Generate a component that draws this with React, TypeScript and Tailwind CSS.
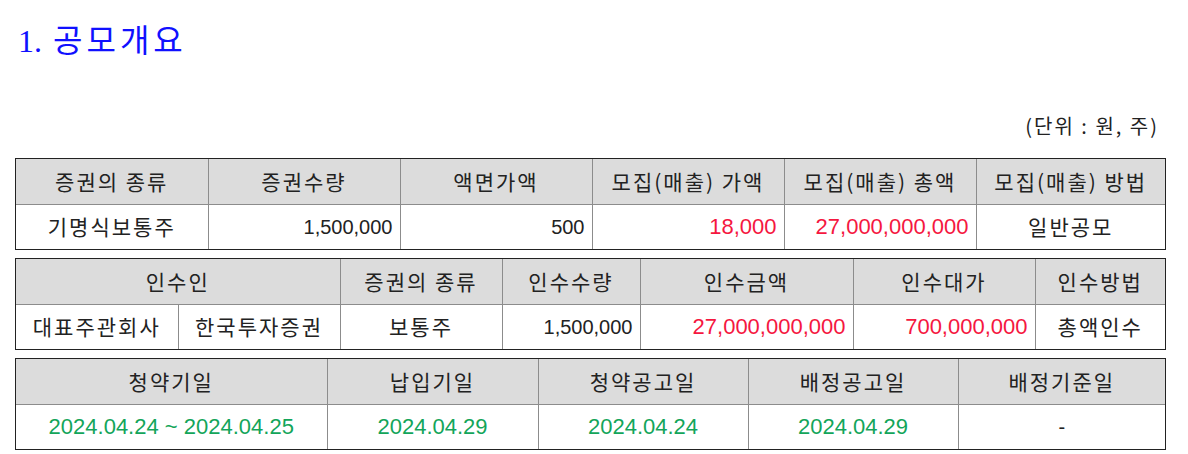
import type { ReactNode } from 'react'

const kr = { fontFamily: '"Noto Sans CJK KR", "Noto Sans", sans-serif' }
const num = { fontFamily: '"Liberation Sans", "Noto Sans CJK KR", sans-serif' }

function Th({ children, span }: { children: ReactNode; span?: number }) {
  return (
    <th
      colSpan={span}
      className="h-[45px] border border-[#8c8c8c] bg-[#dcdcdc] p-0 text-center text-[21px] font-normal tracking-[2px] text-[#222]"
      style={kr}
    >
      {children}
    </th>
  )
}

function Td({
  children,
  align = 'center',
  tone = 'plain',
}: {
  children: ReactNode
  align?: 'center' | 'right'
  tone?: 'plain' | 'num' | 'red' | 'green'
}) {
  const color =
    tone === 'red'
      ? 'text-[#f5173f] text-[22px]'
      : tone === 'green'
        ? 'text-[#13a55a] text-[22px]'
        : tone === 'num'
          ? 'text-[#222] text-[20px]'
          : 'text-[#222] text-[21px] tracking-[2px]'
  return (
    <td
      className={`h-[45px] border border-[#8c8c8c] bg-white p-0 ${
        align === 'right' ? 'pr-[7px] text-right' : 'text-center'
      } ${color}`}
      style={tone === 'plain' ? kr : num}
    >
      {children}
    </td>
  )
}

function Box({ children, className = '' }: { children: ReactNode; className?: string }) {
  return (
    <div className={`ml-[15px] w-[1151px] border border-[#222] ${className}`}>
      <table className="w-full table-fixed border-collapse border-hidden">{children}</table>
    </div>
  )
}

export default function App() {
  return (
    <div className="h-[454px] w-[1188px] bg-white">
      <div
        className="flex h-[82px] items-center gap-[11px] pl-[18px] text-[32px] leading-none text-[#1010ff]"
        style={{ fontFamily: '"Liberation Serif", "Noto Sans CJK KR", serif' }}
      >
        <span>1.</span>
        <span className="tracking-[4px]">공모개요</span>
      </div>

      <div className="flex h-[56px] items-end justify-end pr-[29px] text-[20px] leading-[24px] tracking-[2px] text-[#222]" style={kr}>
        (단위 : 원, 주)
      </div>

      <Box className="mt-[20px]">
        <colgroup>
          <col className="w-[192px]" />
          <col className="w-[192px]" />
          <col className="w-[192px]" />
          <col className="w-[192px]" />
          <col className="w-[192px]" />
          <col />
        </colgroup>
        <tbody>
          <tr>
            <Th>증권의 종류</Th>
            <Th>증권수량</Th>
            <Th>액면가액</Th>
            <Th>모집(매출) 가액</Th>
            <Th>모집(매출) 총액</Th>
            <Th>모집(매출) 방법</Th>
          </tr>
          <tr>
            <Td>기명식보통주</Td>
            <Td align="right" tone="num">1,500,000</Td>
            <Td align="right" tone="num">500</Td>
            <Td align="right" tone="red">18,000</Td>
            <Td align="right" tone="red">27,000,000,000</Td>
            <Td>일반공모</Td>
          </tr>
        </tbody>
      </Box>

      <Box className="mt-[8px]">
        <colgroup>
          <col className="w-[162px]" />
          <col className="w-[162px]" />
          <col className="w-[162px]" />
          <col className="w-[138px]" />
          <col className="w-[213px]" />
          <col className="w-[182px]" />
          <col />
        </colgroup>
        <tbody>
          <tr>
            <Th span={2}>인수인</Th>
            <Th>증권의 종류</Th>
            <Th>인수수량</Th>
            <Th>인수금액</Th>
            <Th>인수대가</Th>
            <Th>인수방법</Th>
          </tr>
          <tr>
            <Td>대표주관회사</Td>
            <Td>한국투자증권</Td>
            <Td>보통주</Td>
            <Td align="right" tone="num">1,500,000</Td>
            <Td align="right" tone="red">27,000,000,000</Td>
            <Td align="right" tone="red">700,000,000</Td>
            <Td>총액인수</Td>
          </tr>
        </tbody>
      </Box>

      <Box className="mt-[8px]">
        <colgroup>
          <col className="w-[311px]" />
          <col className="w-[211px]" />
          <col className="w-[210px]" />
          <col className="w-[210px]" />
          <col />
        </colgroup>
        <tbody>
          <tr>
            <Th>청약기일</Th>
            <Th>납입기일</Th>
            <Th>청약공고일</Th>
            <Th>배정공고일</Th>
            <Th>배정기준일</Th>
          </tr>
          <tr>
            <Td tone="green">2024.04.24 ~ 2024.04.25</Td>
            <Td tone="green">2024.04.29</Td>
            <Td tone="green">2024.04.24</Td>
            <Td tone="green">2024.04.29</Td>
            <Td tone="num">-</Td>
          </tr>
        </tbody>
      </Box>
    </div>
  )
}
